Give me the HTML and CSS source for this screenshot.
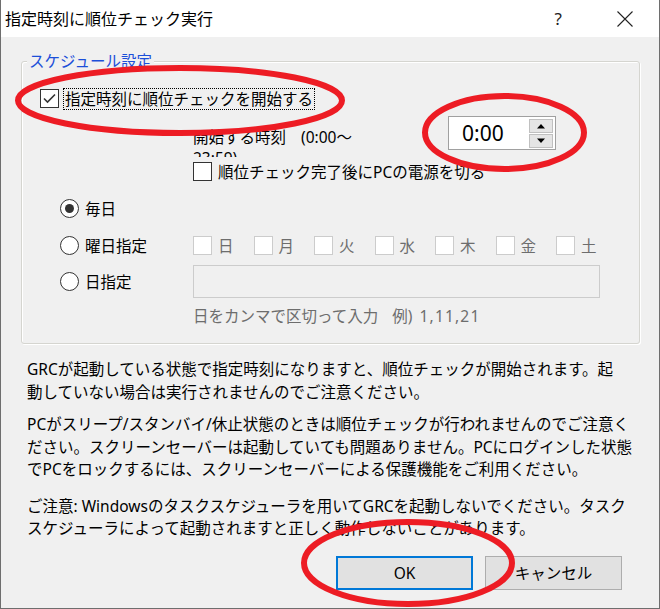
FILE: index.html
```html
<!DOCTYPE html>
<html lang="ja">
<head>
<meta charset="utf-8">
<title>指定時刻に順位チェック実行</title>
<link rel="stylesheet" href="styles.css">
</head>
<body>
<div class="window">
  <div class="titlebar">
    <span class="title">指定時刻に順位チェック実行</span>
    <div class="controls">
      <span class="help">?</span>
      <svg class="close" width="16" height="16" viewBox="0 0 16 16"><path d="M0.5 0.5 L15.5 15.5 M15.5 0.5 L0.5 15.5" stroke="#222" stroke-width="1.1" fill="none"/></svg>
    </div>
  </div>
  <div class="body">
    <div class="group">
      <div class="legend">スケジュール設定</div>
      <div class="row r1">
        <span class="cb checked"><svg width="17" height="17" viewBox="0 0 17 17"><path d="M3 8.5 L6.5 12 L14 4.5" stroke="#333" stroke-width="1.6" fill="none"/></svg></span>
        <span class="focus">指定時刻に順位チェックを開始する</span>
      </div>
      <div class="row r2">
        <div class="timelabel">開始する時刻 (0:00～<br>23:59)</div>
        <div class="spinner">
          <span class="value">0:00</span>
          <div class="spins">
            <span class="spin"><svg width="10" height="6" viewBox="0 0 10 6"><path d="M1 5.5 L5 1 L9 5.5 Z" fill="#000"/></svg></span>
            <span class="spin"><svg width="10" height="6" viewBox="0 0 10 6"><path d="M1 0.5 L5 5 L9 0.5 Z" fill="#000"/></svg></span>
          </div>
        </div>
      </div>
      <div class="row r3">
        <span class="cb"></span>
        <span class="lbl">順位チェック完了後にPCの電源を切る</span>
      </div>
      <div class="row r4">
        <div class="radiocol"><span class="radio on"></span><span class="lbl">毎日</span></div>
      </div>
      <div class="row r5">
        <div class="radiocol"><span class="radio"></span><span class="lbl">曜日指定</span></div>
        <div class="days">
          <div class="day"><span class="cb dis"></span><span class="dlbl">日</span></div>
          <div class="day"><span class="cb dis"></span><span class="dlbl">月</span></div>
          <div class="day"><span class="cb dis"></span><span class="dlbl">火</span></div>
          <div class="day"><span class="cb dis"></span><span class="dlbl">水</span></div>
          <div class="day"><span class="cb dis"></span><span class="dlbl">木</span></div>
          <div class="day"><span class="cb dis"></span><span class="dlbl">金</span></div>
          <div class="day"><span class="cb dis"></span><span class="dlbl">土</span></div>
        </div>
      </div>
      <div class="row r6">
        <div class="radiocol"><span class="radio"></span><span class="lbl">日指定</span></div>
        <div class="textbox"></div>
      </div>
      <div class="hint">日をカンマで区切って入力&nbsp;&nbsp;例) <span class="num">1,11,21</span></div>
    </div>
    <div class="notes">
      <p class="p1">GRCが起動している状態で指定時刻になりますと、順位チェックが開始されます。起<br>動していない場合は実行されませんのでご注意ください。</p>
      <p class="p2">PCがスリープ/スタンバイ/休止状態のときは順位チェックが行われませんのでご注意く<br>ださい。スクリーンセーバーは起動していても問題ありません。PCにログインした状態<br>でPCをロックするには、スクリーンセーバーによる保護機能をご利用ください。</p>
      <p class="p3">ご注意: Windowsのタスクスケジューラを用いてGRCを起動しないでください。タスク<br>スケジューラによって起動されますと正しく動作しないことがあります。</p>
    </div>
    <div class="buttons">
      <span class="btn ok">OK</span>
      <span class="btn">キャンセル</span>
    </div>
  </div>
  <svg class="marks" width="660" height="609" viewBox="0 0 660 609">
    <ellipse cx="180" cy="100.5" rx="162" ry="32.5" fill="none" stroke="#ed1c24" stroke-width="6"/>
    <ellipse cx="504.5" cy="132.5" rx="79.5" ry="36.5" fill="none" stroke="#ed1c24" stroke-width="6"/>
    <ellipse cx="408" cy="563" rx="104" ry="41" fill="none" stroke="#ed1c24" stroke-width="6"/>
  </svg>
</div>
</body>
</html>
```
FILE: styles.css
```css
* { box-sizing: border-box; }
html, body { margin: 0; padding: 0; }
body {
  font-family: "Noto Sans", "Noto Sans CJK JP", sans-serif;
  font-size: 15.5px;
  color: #000;
  background: #fff;
}
.window {
  position: relative;
  width: 660px;
  height: 609px;
  border-left: 1px solid #6e6e6e;
  border-right: 1px solid #6e6e6e;
  border-bottom: 1px solid #6e6e6e;
  display: flex;
  flex-direction: column;
  overflow: hidden;
}
.titlebar {
  height: 37px;
  background: #fff;
  display: flex;
  align-items: center;
  justify-content: space-between;
  padding-left: 4px;
}
.title { font-size: 16px; line-height: 20px; }
.controls { display: flex; align-items: center; }
.help { font-size: 17px; color: #222; margin-right: 55px; line-height: 20px; }
.close { margin-right: 26px; display: block; }
.body {
  flex: 1;
  background: #f0f0f0;
  padding: 24px 0 0 20px;
}
.group {
  position: relative;
  width: 619px;
  height: 283px;
  border: 1px solid #d5d5d0;
  border-radius: 3px;
  box-shadow: inset 1px 1px 0 #fff, 1px 1px 0 #fff;
  padding-top: 25px;
}
.legend {
  position: absolute;
  top: -12px;
  left: 5px;
  padding: 0 2px;
  background: #f0f0f0;
  color: #1c4fd9;
  line-height: 22px;
}
.row {
  display: flex;
  align-items: center;
}
.r1 { height: 23px; padding-left: 18px; }
.r2 { height: 34px; margin-top: 6px; padding-left: 171px; align-items: flex-start; }
.r3 { height: 23px; margin-top: 10px; padding-left: 171px; }
.r4 { height: 23px; margin-top: 14px; padding-left: 38px; }
.r5 { height: 23px; margin-top: 14px; padding-left: 38px; }
.r6 { height: 33px; margin-top: 8px; padding-left: 38px; }
.cb {
  width: 19px;
  height: 19px;
  border: 1px solid #333;
  background: #fff;
  display: inline-flex;
  align-items: center;
  justify-content: center;
  flex: none;
}
.cb.dis { border-color: #cccccc; }
.focus {
  margin-left: 4px;
  padding: 0 1px;
  border: 1px dotted #000;
  line-height: 20px;
}
.lbl { margin-left: 6px; line-height: 20px; }
.timelabel {
  width: 255px;
  height: 30px;
  margin-top: 11px;
  line-height: 21px;
  overflow: hidden;
  word-spacing: 11px;
}
.spinner {
  width: 108px;
  height: 34px;
  border: 1px solid #a0a0a0;
  background: #fff;
  display: flex;
  align-items: center;
  justify-content: space-between;
  padding: 0 2px 0 13px;
}
.value { font-size: 21px; line-height: 30px; }
.spins { display: flex; flex-direction: column; gap: 1px; }
.spin {
  width: 24px;
  height: 14px;
  background: #e5e5e5;
  border: 1px solid #c0c0c0;
  display: flex;
  align-items: center;
  justify-content: center;
}
.spin svg { display: block; }
.radiocol { width: 133px; display: flex; align-items: center; }
.radio {
  width: 19px;
  height: 19px;
  border: 1px solid #333;
  border-radius: 50%;
  background: #fff;
  display: inline-flex;
  align-items: center;
  justify-content: center;
  flex: none;
}
.radio.on::after {
  content: "";
  width: 9px;
  height: 9px;
  border-radius: 50%;
  background: #333;
}
.radiocol .lbl { margin-left: 6px; }
.days { display: flex; }
.day { width: 60.5px; display: flex; align-items: center; }
.dlbl { margin-left: 6px; color: #6d6d6d; line-height: 20px; }
.textbox {
  width: 407px;
  height: 33px;
  border: 1px solid #cccccc;
  background: #f0f0f0;
}
.hint {
  margin-top: 8px;
  padding-left: 171px;
  color: #6d6d6d;
  line-height: 20px;
  word-spacing: 3px;
}
.num { letter-spacing: 1.2px; }
.notes { padding-left: 6px; }
.notes p { margin: 0; line-height: 22.5px; }
.p1 { margin-top: 14px !important; }
.p2 { margin-top: 10px !important; }
.p3 { margin-top: 14px !important; }
.buttons {
  display: flex;
  justify-content: flex-end;
  gap: 12px;
  padding-right: 37px;
  margin-top: 16px;
}
.btn {
  width: 137px;
  height: 34px;
  background: #e1e1e1;
  border: 1px solid #adadad;
  display: flex;
  align-items: center;
  justify-content: center;
}
.btn.ok { border: 2px solid #0078d7; }
.marks {
  position: absolute;
  left: -1px;
  top: 0;
  pointer-events: none;
}
```
